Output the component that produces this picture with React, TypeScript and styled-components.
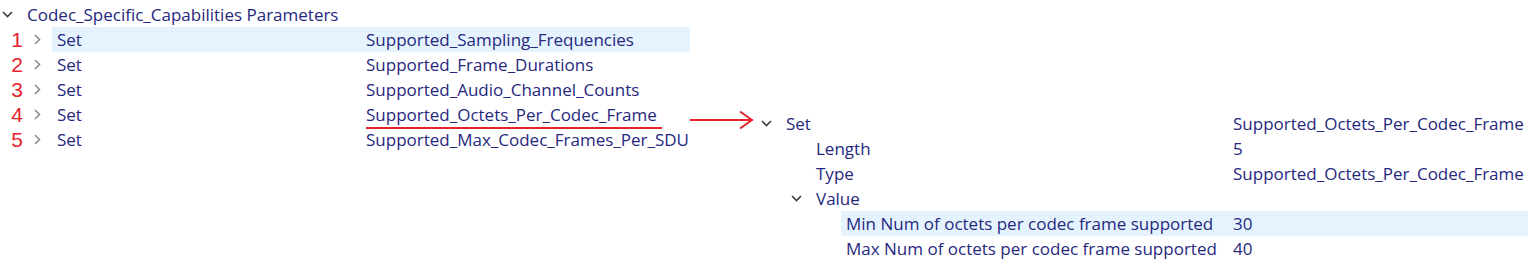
import React from "react";
import styled, { createGlobalStyle } from "styled-components";

const GlobalStyle = createGlobalStyle`
  html, body { margin: 0; padding: 0; background: #ffffff; }
  body {
    font-family: "Segoe UI", "Open Sans", "Noto Sans", sans-serif;
    font-size: 17px;
    color: #26287e;
  }
`;

const Page = styled.div`
  display: flex;
  align-items: flex-start;
  padding-top: 2px;
  width: 1528px;
`;

const Tree = styled.div<{ $width?: number; $top?: number }>`
  display: flex;
  flex-direction: column;
  width: ${(p) => (p.$width ? `${p.$width}px` : "auto")};
  flex: ${(p) => (p.$width ? "none" : "1")};
  margin-top: ${(p) => p.$top ?? 0}px;
`;

const Row = styled.div`
  display: flex;
  align-items: center;
  height: 25px;
`;

const Indent = styled.div<{ $level: number }>`
  width: ${(p) => p.$level * 30}px;
  flex: none;
  display: flex;
  justify-content: flex-end;
`;

const Marker = styled.span`
  font-family: "Liberation Sans", Arial, sans-serif;
  font-size: 21px;
  line-height: 25px;
  color: #e8222b;
  margin-right: 7px;
`;

const Toggle = styled.div<{ $open?: boolean }>`
  width: 14px;
  height: 25px;
  margin-right: 8px;
  flex: none;
  display: flex;
  align-items: center;
  justify-content: center;
  color: ${(p) => (p.$open ? "#3c3c3c" : "#8e8e8e")};
`;

const Body = styled.div<{ $selected?: boolean }>`
  flex: 1;
  display: flex;
  align-items: center;
  height: 25px;
  background: ${(p) => (p.$selected ? "#e5f3ff" : "transparent")};
`;

const Label = styled.span`
  flex: 1;
  padding-left: 5px;
  white-space: nowrap;
  line-height: 25px;
`;

const Value = styled.span<{ $width: number }>`
  width: ${(p) => p.$width}px;
  flex: none;
  white-space: nowrap;
  line-height: 25px;
`;

const Underlined = styled.span`
  display: inline-block;
  line-height: 25px;
  padding-right: 5px;
  box-shadow: 0 2px 0 #e8222b;
`;

const Connector = styled.div`
  width: 69px;
  flex: none;
  margin-top: 108px;
  height: 20px;
  display: flex;
`;

const ChevronDown = () => (
  <svg width="11" height="7" viewBox="0 0 11 7" fill="none">
    <polyline points="1,1 5.5,5.5 10,1" stroke="currentColor" strokeWidth="1.6" />
  </svg>
);

const ChevronRight = () => (
  <svg width="7" height="11" viewBox="0 0 7 11" fill="none">
    <polyline points="1,1 5.5,5.5 1,10" stroke="currentColor" strokeWidth="1.6" />
  </svg>
);

const Arrow = () => (
  <svg width="69" height="20" viewBox="0 0 69 20" fill="none">
    <line x1="0" y1="10" x2="62" y2="10" stroke="#e8222b" strokeWidth="2" />
    <polyline points="50,1.5 62,10 50,18.5" stroke="#e8222b" strokeWidth="2" fill="none" />
  </svg>
);

type Node = {
  level: number;
  label: string;
  value?: string;
  toggle?: "open" | "closed";
  marker?: string;
  selected?: boolean;
  underline?: boolean;
};

const leftRows: Node[] = [
  { level: 0, label: "Codec_Specific_Capabilities Parameters", toggle: "open" },
  { level: 1, marker: "1", toggle: "closed", label: "Set", value: "Supported_Sampling_Frequencies", selected: true },
  { level: 1, marker: "2", toggle: "closed", label: "Set", value: "Supported_Frame_Durations" },
  { level: 1, marker: "3", toggle: "closed", label: "Set", value: "Supported_Audio_Channel_Counts" },
  { level: 1, marker: "4", toggle: "closed", label: "Set", value: "Supported_Octets_Per_Codec_Frame", underline: true },
  { level: 1, marker: "5", toggle: "closed", label: "Set", value: "Supported_Max_Codec_Frames_Per_SDU" },
];

const rightRows: Node[] = [
  { level: 0, toggle: "open", label: "Set", value: "Supported_Octets_Per_Codec_Frame" },
  { level: 1, label: "Length", value: "5" },
  { level: 1, label: "Type", value: "Supported_Octets_Per_Codec_Frame" },
  { level: 1, toggle: "open", label: "Value" },
  { level: 2, label: "Min Num of octets per codec frame supported", value: "30", selected: true },
  { level: 2, label: "Max Num of octets per codec frame supported", value: "40" },
];

const TreeView = ({ rows, valueWidth }: { rows: Node[]; valueWidth: number }) => (
  <>
    {rows.map((r, i) => (
      <Row key={i}>
        <Indent $level={r.level}>{r.marker && <Marker>{r.marker}</Marker>}</Indent>
        <Toggle $open={r.toggle === "open"}>
          {r.toggle === "open" && <ChevronDown />}
          {r.toggle === "closed" && <ChevronRight />}
        </Toggle>
        <Body $selected={r.selected}>
          <Label>{r.label}</Label>
          {r.value !== undefined || r.level > 0 ? (
            <Value $width={valueWidth}>
              {r.underline ? <Underlined>{r.value}</Underlined> : r.value}
            </Value>
          ) : null}
        </Body>
      </Row>
    ))}
  </>
);

export default function App() {
  return (
    <>
      <GlobalStyle />
      <Page>
        <Tree $width={690}>
          <TreeView rows={leftRows} valueWidth={324} />
        </Tree>
        <Connector>
          <Arrow />
        </Connector>
        <Tree $top={109}>
          <TreeView rows={rightRows} valueWidth={295} />
        </Tree>
      </Page>
    </>
  );
}
